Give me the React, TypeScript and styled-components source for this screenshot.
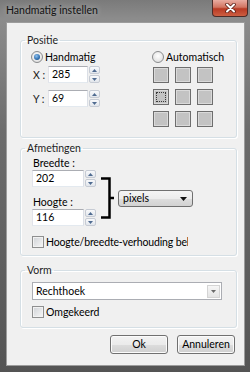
import styled, { createGlobalStyle } from "styled-components";

const GlobalStyle = createGlobalStyle`
  html, body {
    margin: 0;
    padding: 0;
    background: #5f5f5f;
  }
`;

const Window = styled.div`
  width: 250px;
  height: 372px;
  box-sizing: border-box;
  display: flex;
  flex-direction: column;
  padding: 0 5px 6px 6px;
  background: linear-gradient(to bottom, #7a7a7a 0%, #8c8c8c 5%, #6c6c6c 35%, #545454 100%);
  font-family: Lato, "Noto Sans", sans-serif;
  font-size: 10.5px;
  color: #000;
`;

const TitleBar = styled.div`
  height: 22px;
  flex: none;
  display: flex;
  align-items: flex-start;
  justify-content: space-between;
`;

const Title = styled.span`
  margin-top: 3px;
  font-size: 10.5px;
  line-height: 15px;
  color: #121212;
  text-shadow: 0 0 6px rgba(255, 255, 255, 0.55);
`;

const CloseButton = styled.div`
  width: 36px;
  height: 17px;
  margin-right: -3px;
  box-sizing: border-box;
  border: 1px solid #4d2c28;
  border-top: none;
  border-radius: 0 0 4px 4px;
  background: linear-gradient(#e9aca1 0%, #d27562 45%, #b83a24 55%, #cd5f42 100%);
  display: flex;
  align-items: center;
  justify-content: center;
`;

const Body = styled.div`
  flex: 1;
  display: flex;
  flex-direction: column;
  box-sizing: border-box;
  background: #f0f0f0;
  border: 1px solid #9c9c9c;
  padding: 10px 7px 0 13px;
`;

const GroupBox = styled.fieldset<{ $gap: number }>`
  margin: ${(p) => p.$gap}px 0 0;
  padding: 0;
  min-width: 0;
  border: 1px solid #d5dfe5;
  border-radius: 3px;
  box-shadow: inset 1px 1px 0 #fff, 1px 1px 0 #fff;
`;

const Legend = styled.legend`
  margin-left: 4px;
  padding: 0 2px;
  font-size: 10.5px;
  line-height: 14px;
  color: #1e1e1e;
`;

const GroupContent = styled.div<{ $pad: string }>`
  padding: ${(p) => p.$pad};
`;

const TwoColumns = styled.div`
  display: flex;
`;

const Column = styled.div<{ $w?: number }>`
  display: flex;
  flex-direction: column;
  width: ${(p) => (p.$w ? `${p.$w}px` : "auto")};
`;

const RadioRow = styled.label`
  display: flex;
  align-items: center;
  gap: 2px;
  height: 14px;
  line-height: 14px;
`;

const Radio = styled.span<{ $on?: boolean }>`
  width: 12px;
  height: 12px;
  box-sizing: border-box;
  border-radius: 50%;
  border: 1px solid #8a8c8e;
  background: radial-gradient(circle at 50% 40%, #ffffff 0%, #e4e4e4 70%, #d0d0d0 100%);
  display: flex;
  align-items: center;
  justify-content: center;

  &::after {
    content: "";
    width: 6px;
    height: 6px;
    border-radius: 50%;
    display: ${(p) => (p.$on ? "block" : "none")};
    background: radial-gradient(circle at 40% 35%, #8fc2f0 0%, #2f6eae 60%, #1c4676 100%);
  }
`;

const FieldRow = styled.div<{ $gap: number }>`
  display: flex;
  align-items: center;
  margin-top: ${(p) => p.$gap}px;
`;

const AxisLabel = styled.span`
  width: 17px;
  padding-left: 2px;
  box-sizing: border-box;
  color: #1a1a1a;
`;

const Field = styled.div<{ $w: number }>`
  width: ${(p) => p.$w}px;
  height: 17px;
  box-sizing: border-box;
  border: 1px solid;
  border-color: #abadb3 #dbdfe6 #e3e9ef #e2e3ea;
  background: #fff;
  padding-left: 3px;
  line-height: 15px;
`;

const Spinner = styled.div`
  width: 11px;
  height: 17px;
  margin-left: 1px;
  display: flex;
  flex-direction: column;
  gap: 1px;
`;

const SpinButton = styled.div`
  flex: 1;
  border: 1px solid #c6cbd4;
  border-radius: 2px;
  background: linear-gradient(#f8f9fb, #e2e6ec);
  display: flex;
  align-items: center;
  justify-content: center;
`;

const AnchorGrid = styled.div`
  display: grid;
  grid-template-columns: repeat(3, 16px);
  grid-auto-rows: 16px;
  gap: 6px;
  margin: 3px 0 0 1px;
`;

const Anchor = styled.div<{ $selected?: boolean }>`
  position: relative;
  box-sizing: border-box;
  border: 1px solid #6e6e6e;
  background: #c3c3c3;
  box-shadow: inset 0 0 0 1px #dadada;

  &::after {
    content: "";
    display: ${(p) => (p.$selected ? "block" : "none")};
    position: absolute;
    inset: 2px;
    border: 1px dotted #3a3a3a;
  }
`;

const SizeRow = styled.div`
  display: flex;
  align-items: flex-start;
`;

const FieldLabel = styled.div<{ $gap: number }>`
  margin-top: ${(p) => p.$gap}px;
  padding-left: 1px;
  line-height: 13px;
`;

const Bracket = styled.svg`
  margin: 20px 0 0 4px;
  flex: none;
`;

const UnitSelect = styled.div`
  width: 75px;
  height: 17px;
  margin: 33px 0 0 4px;
  box-sizing: border-box;
  border: 1px solid #707070;
  border-radius: 3px;
  background: linear-gradient(#f4f4f4 0%, #ececec 50%, #dedede 51%, #d2d2d2 100%);
  display: flex;
  align-items: center;
  justify-content: space-between;
  padding: 0 5px 0 4px;
  line-height: 15px;
`;

const CheckRow = styled.label<{ $gap: number }>`
  display: flex;
  align-items: center;
  gap: 2px;
  margin-top: ${(p) => p.$gap}px;
  height: 12px;
  line-height: 14px;
`;

const Checkbox = styled.span`
  width: 12px;
  height: 12px;
  flex: none;
  box-sizing: border-box;
  border: 1px solid #8e8f8f;
  background: linear-gradient(135deg, #cfd2d6, #f7f7f7);
  box-shadow: inset 0 0 0 1px #f2f2f2;
`;

const ClippedText = styled.span<{ $w: number }>`
  width: ${(p) => p.$w}px;
  overflow: hidden;
  white-space: nowrap;
  letter-spacing: -0.15px;
`;

const ComboBox = styled.div`
  width: 190px;
  height: 18px;
  box-sizing: border-box;
  border: 1px solid #abadb3;
  background: #fff;
  display: flex;
  align-items: center;
  justify-content: space-between;
  padding: 0 1px 0 3px;
  line-height: 16px;
`;

const ComboArrow = styled.div`
  width: 13px;
  height: 13px;
  box-sizing: border-box;
  border: 1px solid #d4d4d4;
  background: linear-gradient(#f6f6f6, #e4e4e4);
  display: flex;
  align-items: center;
  justify-content: center;
`;

const ButtonRow = styled.div`
  display: flex;
  justify-content: flex-end;
  gap: 9px;
  margin: 7px 2px 0 0;
`;

const Button = styled.button`
  width: 58px;
  height: 19px;
  padding: 0;
  box-sizing: border-box;
  border: 1px solid #707070;
  border-radius: 3px;
  background: linear-gradient(#f2f2f2 0%, #ebebeb 50%, #dddddd 51%, #cfcfcf 100%);
  box-shadow: inset 0 0 0 1px #fbfbfb;
  font-family: Lato, "Noto Sans", sans-serif;
  font-size: 10.5px;
  line-height: 17px;
  color: #000;
`;

const SpinArrow = ({ up }: { up?: boolean }) => (
  <svg width="5" height="3" viewBox="0 0 5 3">
    <path d={up ? "M0 3 L2.5 0 L5 3 Z" : "M0 0 L2.5 3 L5 0 Z"} fill="#4f6b90" />
  </svg>
);

const SpinBox = () => (
  <Spinner>
    <SpinButton>
      <SpinArrow up />
    </SpinButton>
    <SpinButton>
      <SpinArrow />
    </SpinButton>
  </Spinner>
);

export default function App() {
  return (
    <>
      <GlobalStyle />
      <Window>
        <TitleBar>
          <Title>Handmatig instellen</Title>
          <CloseButton>
            <svg width="11" height="10" viewBox="0 0 11 10">
              <path d="M2 1.5 L9 8.5 M9 1.5 L2 8.5" stroke="#5b1f16" strokeWidth="3.6" strokeLinecap="round" />
              <path d="M2 1.5 L9 8.5 M9 1.5 L2 8.5" stroke="#fff" strokeWidth="2" strokeLinecap="round" />
            </svg>
          </CloseButton>
        </TitleBar>

        <Body>
          <GroupBox $gap={0}>
            <Legend>Positie</Legend>
            <GroupContent $pad="3px 0 10px 10px">
              <TwoColumns>
                <Column $w={121}>
                  <RadioRow>
                    <Radio $on />
                    Handmatig
                  </RadioRow>
                  <FieldRow $gap={2}>
                    <AxisLabel>X :</AxisLabel>
                    <Field $w={40}>285</Field>
                    <SpinBox />
                  </FieldRow>
                  <FieldRow $gap={7}>
                    <AxisLabel>Y :</AxisLabel>
                    <Field $w={40}>69</Field>
                    <SpinBox />
                  </FieldRow>
                </Column>
                <Column>
                  <RadioRow>
                    <Radio />
                    Automatisch
                  </RadioRow>
                  <AnchorGrid>
                    <Anchor />
                    <Anchor />
                    <Anchor />
                    <Anchor $selected />
                    <Anchor />
                    <Anchor />
                    <Anchor />
                    <Anchor />
                    <Anchor />
                  </AnchorGrid>
                </Column>
              </TwoColumns>
            </GroupContent>
          </GroupBox>

          <GroupBox $gap={3}>
            <Legend>Afmetingen</Legend>
            <GroupContent $pad="2px 0 7px 11px">
              <SizeRow>
                <Column>
                  <FieldLabel $gap={0}>Breedte :</FieldLabel>
                  <FieldRow $gap={0}>
                    <Field $w={52}>202</Field>
                    <SpinBox />
                  </FieldRow>
                  <FieldLabel $gap={9}>Hoogte :</FieldLabel>
                  <FieldRow $gap={0}>
                    <Field $w={52}>116</Field>
                    <SpinBox />
                  </FieldRow>
                </Column>
                <Bracket width="14" height="42" viewBox="0 0 14 42">
                  <path d="M1 1.5 H9.5 V40.5 H1 M9.5 21 H14" fill="none" stroke="#000" strokeWidth="2.5" />
                </Bracket>
                <UnitSelect>
                  pixels
                  <svg width="7" height="4" viewBox="0 0 7 4">
                    <path d="M0 0 L3.5 4 L7 0 Z" fill="#111" />
                  </svg>
                </UnitSelect>
              </SizeRow>
              <CheckRow $gap={10}>
                <Checkbox />
                <ClippedText $w={142}>Hoogte/breedte-verhouding behouden</ClippedText>
              </CheckRow>
            </GroupContent>
          </GroupBox>

          <GroupBox $gap={7}>
            <Legend>Vorm</Legend>
            <GroupContent $pad="5px 0 9px 11px">
              <ComboBox>
                Rechthoek
                <ComboArrow>
                  <svg width="5" height="3" viewBox="0 0 5 3">
                    <path d="M0 0 L2.5 3 L5 0 Z" fill="#6a6a6a" />
                  </svg>
                </ComboArrow>
              </ComboBox>
              <CheckRow $gap={6}>
                <Checkbox />
                Omgekeerd
              </CheckRow>
            </GroupContent>
          </GroupBox>

          <ButtonRow>
            <Button>Ok</Button>
            <Button>Annuleren</Button>
          </ButtonRow>
        </Body>
      </Window>
    </>
  );
}
